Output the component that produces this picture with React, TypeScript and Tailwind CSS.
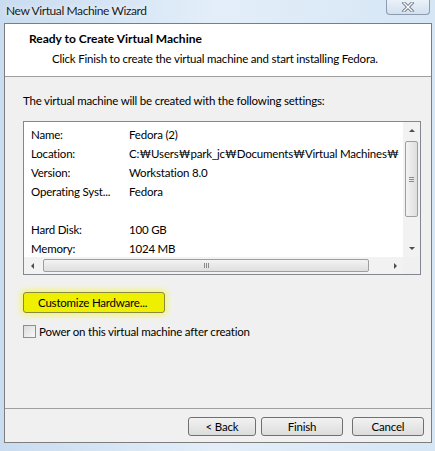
import React from 'react';

const rows: [string, string][] = [
  ['Name:', 'Fedora (2)'],
  ['Location:', 'C:₩Users₩park_jc₩Documents₩Virtual Machines₩'],
  ['Version:', 'Workstation 8.0'],
  ['Operating Syst...', 'Fedora'],
  ['', ''],
  ['Hard Disk:', '100 GB'],
  ['Memory:', '1024 MB'],
];

function Arrow({ dir }: { dir: 'up' | 'down' | 'left' | 'right' }) {
  const pts = {
    up: '1,5 4,2 7,5',
    down: '1,2 4,5 7,2',
    left: '5,1 2,4 5,7',
    right: '3,1 6,4 3,7',
  }[dir];
  return (
    <svg width="8" height="8" viewBox="0 0 8 8">
      <polygon points={pts} fill="#4d4d4d" />
    </svg>
  );
}

function WinButton({ label, className = '' }: { label: string; className?: string }) {
  return (
    <button
      className={`h-[19px] rounded-[3px] border border-[#707070] bg-gradient-to-b from-[#f2f2f2] to-[#dcdcdc] text-[11.5px] leading-none tracking-[-0.2px] text-black ${className}`}
    >
      {label}
    </button>
  );
}

export default function App() {
  return (
    <div
      className="relative h-[451px] w-[435px] overflow-hidden bg-gradient-to-r from-[#c9dcf0] via-[#e3eef9] to-[#d6e6f5] text-black"
      style={{ fontFamily: 'Lato, "Noto Sans", sans-serif' }}
    >
      {/* title bar */}
      <div className="flex h-[23px] items-start">
        <div className="pl-[6px] pt-[2px] text-[12px] leading-[18px] tracking-[-0.4px] text-[#1a1a1a] [text-shadow:0_0_6px_#ffffff]">
          New Virtual Machine Wizard
        </div>
        <div className="ml-auto mr-[5px] flex h-[15px] w-[44px] items-center justify-center rounded-b-[4px] border border-t-0 border-[#8b9bb0] bg-gradient-to-b from-[#eaf1f9] to-[#d3e0ee]">
          <svg width="14" height="10" viewBox="0 0 14 10">
            <path d="M3 1 L11 9 M11 1 L3 9" stroke="#6e7a88" strokeWidth="3.2" strokeLinecap="square" />
            <path d="M3 1 L11 9 M11 1 L3 9" stroke="#ffffff" strokeWidth="1.4" strokeLinecap="square" />
          </svg>
        </div>
      </div>

      {/* client area */}
      <div className="ml-[4px] flex h-[420px] w-[428px] flex-col border border-[#7d7d7d] bg-[#f0f0f0] text-[11.5px] tracking-[-0.2px]">
        {/* header */}
        <div className="h-[53px] border-b border-[#a0a0a0] bg-white">
          <div className="pl-[24px] pt-[7px] text-[12px] font-bold leading-[16px] tracking-normal">
            Ready to Create Virtual Machine
          </div>
          <div className="whitespace-nowrap pl-[47px] pt-[4px] leading-[16px]">
            Click Finish to create the virtual machine and start installing Fedora.
          </div>
        </div>

        {/* body */}
        <div className="flex flex-1 flex-col px-[18px]">
          <div className="mt-[16px] leading-[16px]">
            The virtual machine will be created with the following settings:
          </div>

          {/* list box */}
          <div className="mt-[12px] flex h-[154px] w-[398px] flex-col border border-[#828790] bg-white">
            <div className="flex min-h-0 flex-1">
              <div className="min-w-0 flex-1 overflow-hidden pl-[7px] pt-[3px]">
                {rows.map(([k, v], i) => (
                  <div key={i} className="flex h-[19px] items-center whitespace-nowrap">
                    <span className="w-[98px] shrink-0">{k}</span>
                    <span>{v}</span>
                  </div>
                ))}
              </div>
              {/* vertical scrollbar */}
              <div className="flex w-[17px] flex-col items-center bg-[#f2f2f2]">
                <div className="flex h-[17px] items-center justify-center">
                  <Arrow dir="up" />
                </div>
                <div className="mt-[2px] flex h-[76px] w-[13px] items-center justify-center rounded-[2px] border border-[#9e9e9e] bg-gradient-to-r from-[#f3f3f3] to-[#dedede]">
                  <div className="flex flex-col gap-[1px]">
                    <div className="h-px w-[5px] bg-[#8a8a8a]" />
                    <div className="h-px w-[5px] bg-[#8a8a8a]" />
                    <div className="h-px w-[5px] bg-[#8a8a8a]" />
                  </div>
                </div>
                <div className="flex-1" />
                <div className="flex h-[17px] items-center justify-center">
                  <Arrow dir="down" />
                </div>
              </div>
            </div>
            {/* horizontal scrollbar */}
            <div className="flex h-[17px] items-center bg-[#f2f2f2]">
              <div className="flex w-[17px] items-center justify-center">
                <Arrow dir="left" />
              </div>
              <div className="ml-[2px] flex h-[13px] w-[326px] items-center justify-center rounded-[2px] border border-[#9e9e9e] bg-gradient-to-b from-[#f3f3f3] to-[#dedede]">
                <div className="flex gap-[1px]">
                  <div className="h-[5px] w-px bg-[#8a8a8a]" />
                  <div className="h-[5px] w-px bg-[#8a8a8a]" />
                  <div className="h-[5px] w-px bg-[#8a8a8a]" />
                </div>
              </div>
              <div className="flex-1" />
              <div className="flex w-[17px] items-center justify-center">
                <Arrow dir="right" />
              </div>
              <div className="h-[17px] w-[17px] bg-[#f0f0f0]" />
            </div>
          </div>

          {/* customize hardware (highlighted) */}
          <div className="mt-[17px] w-[142px] rounded-[4px] shadow-[0_0_5px_3px_#f4f48a]">
            <button className="flex h-[21px] w-[142px] items-center whitespace-nowrap rounded-[3px] border border-[#8a8a40] bg-[#eef000] pl-[14px] text-[11.5px] tracking-[-0.2px]">
              Customize Hardware...
            </button>
          </div>

          {/* checkbox */}
          <label className="mt-[10px] flex items-center gap-[3px]">
            <span className="h-[13px] w-[13px] border border-[#8f8f8f] bg-gradient-to-br from-[#dcdcdc] to-[#f8f8f8]" />
            Power on this virtual machine after creation
          </label>
        </div>

        {/* footer */}
        <div className="flex h-[34px] items-start border-t border-[#a0a0a0] pt-[8px]">
          <div className="ml-auto flex gap-0">
            <WinButton label="< Back" className="w-[68px]" />
            <WinButton label="Finish" className="ml-[5px] w-[82px]" />
            <WinButton label="Cancel" className="ml-[9px] mr-[7px] w-[72px]" />
          </div>
        </div>
      </div>
    </div>
  );
}
